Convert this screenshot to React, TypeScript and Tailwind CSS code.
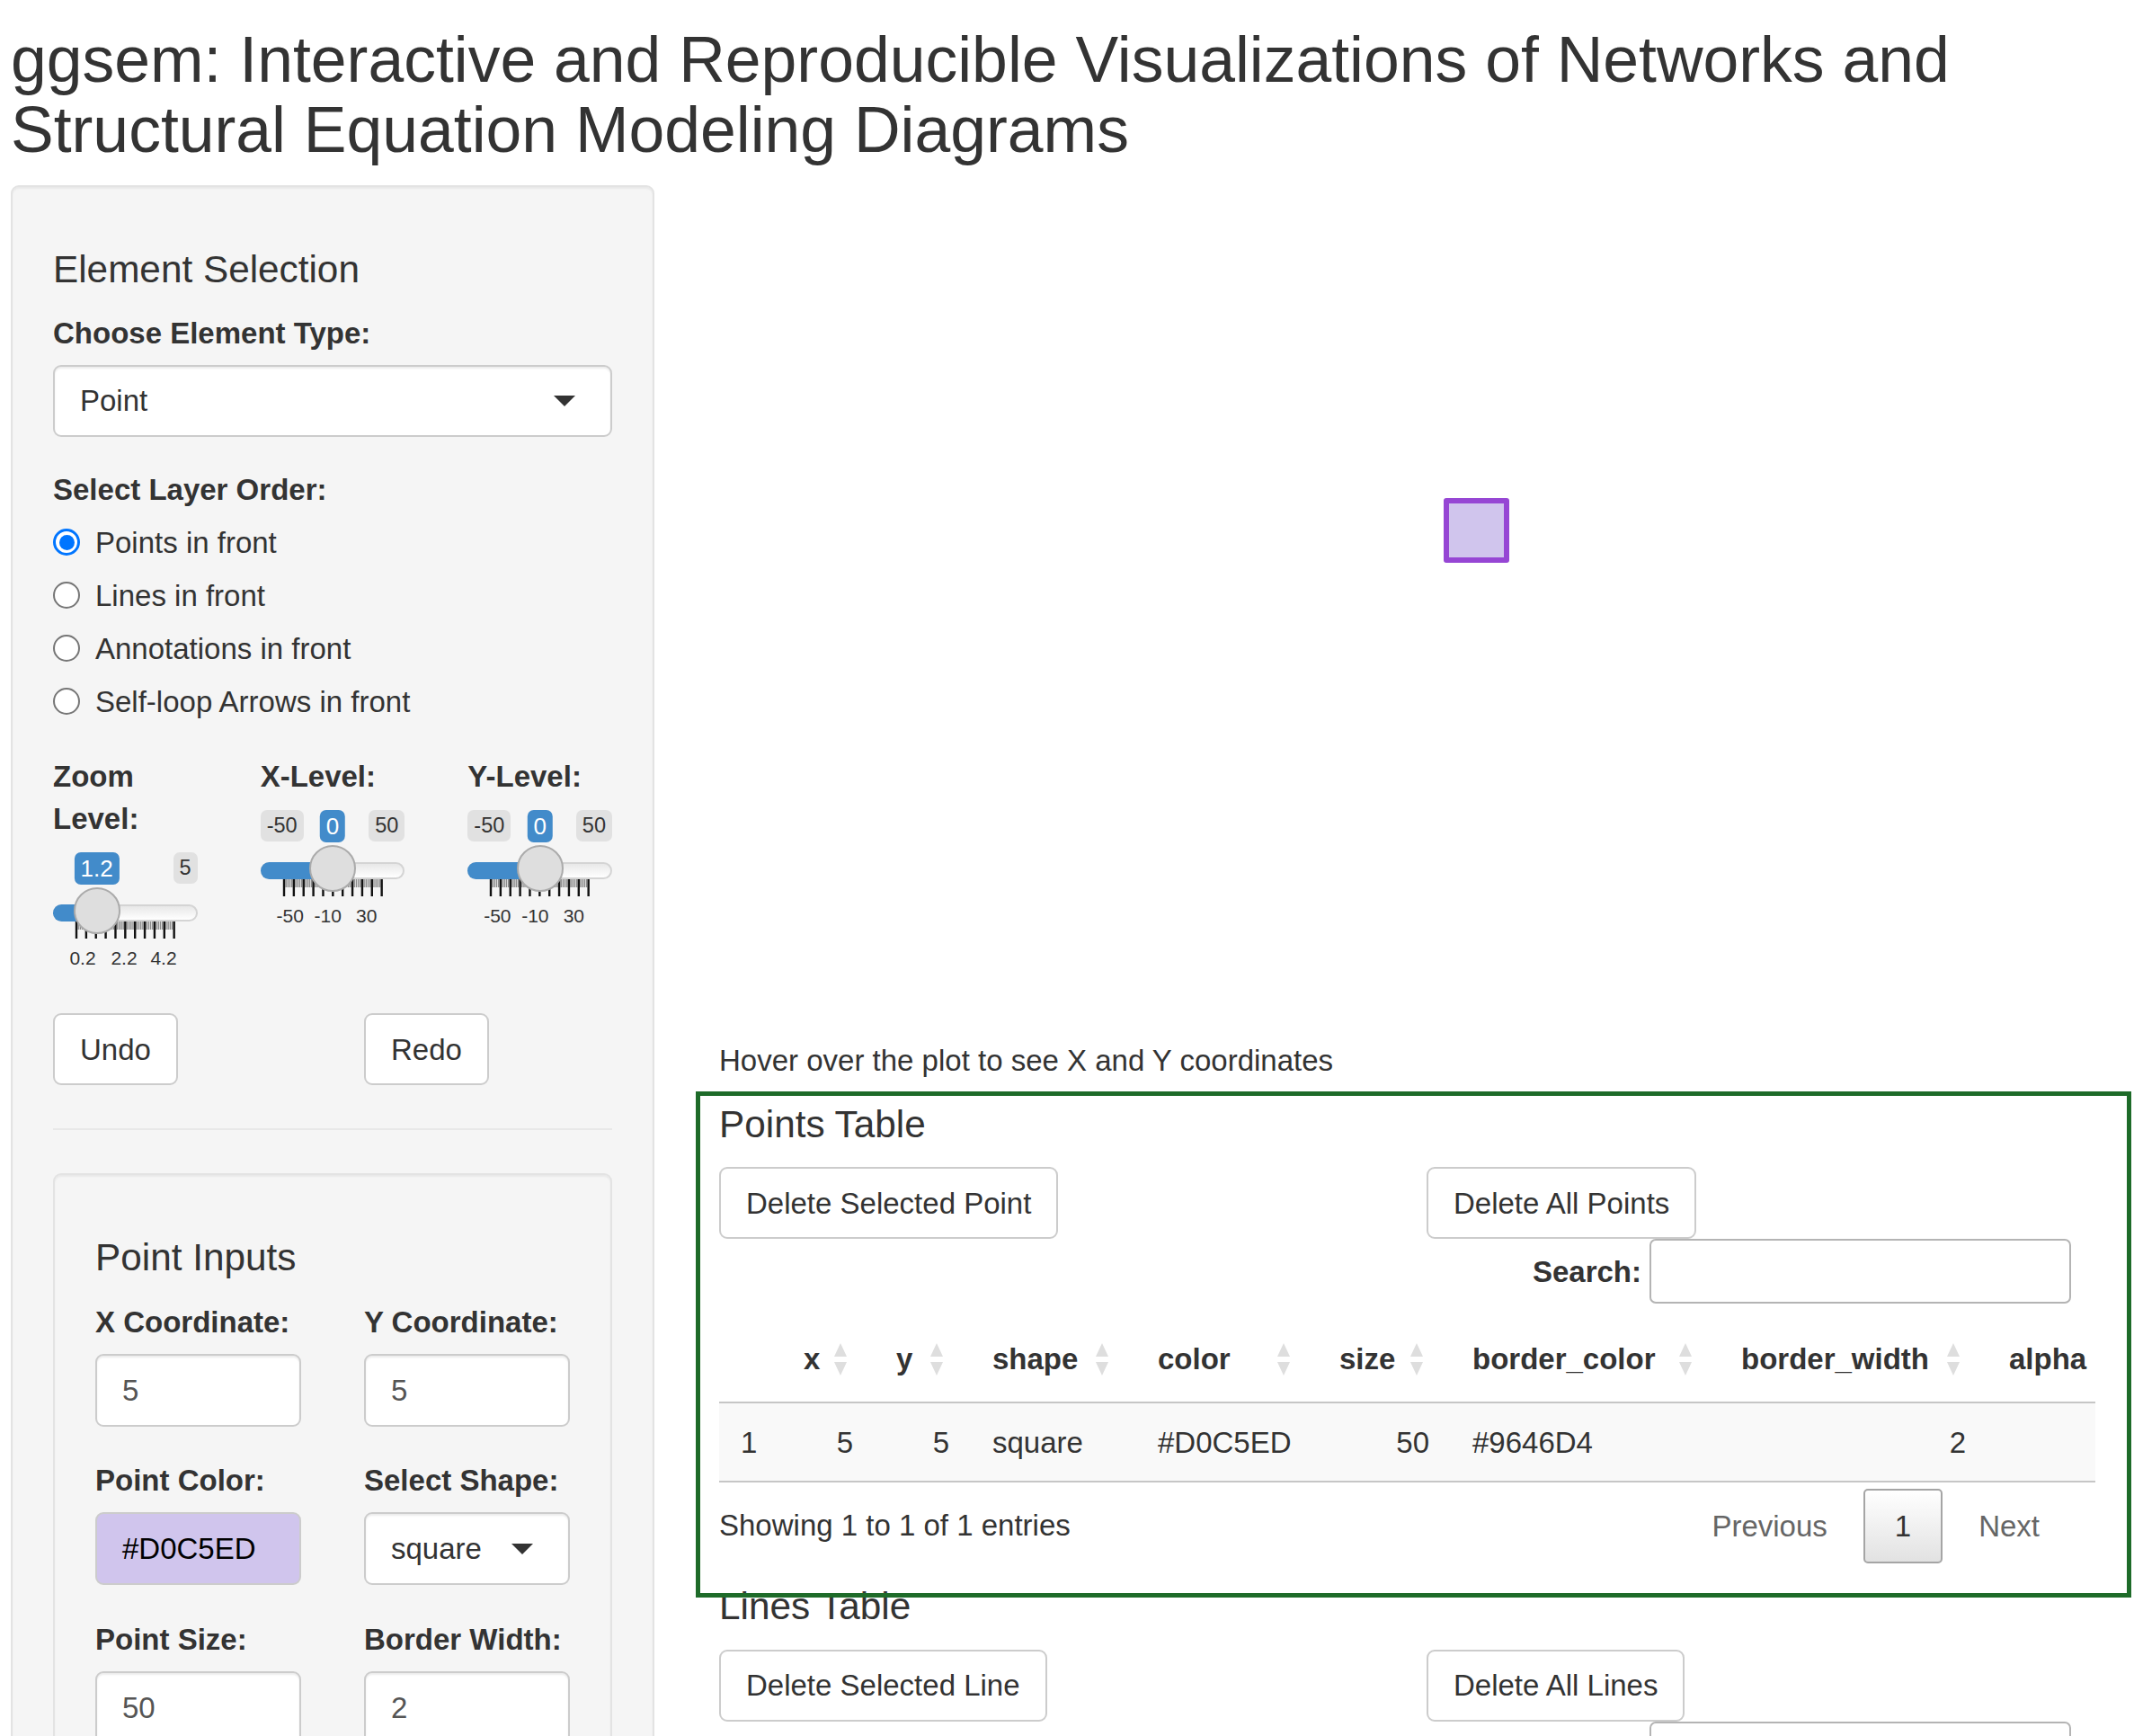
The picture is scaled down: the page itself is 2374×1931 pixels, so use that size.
import React from 'react';

const W = 160.67;
const HANDLE = 52;

type GridText = { t: string; x: number };

function Ticks() {
  const span = W - HANDLE;
  const big: number[] = [];
  const small: number[] = [];
  for (let i = 0; i <= 10; i++) {
    big.push(26 + (i * span) / 10);
    if (i < 10) {
      for (let j = 1; j < 5; j++) small.push(26 + ((i + j / 5) * span) / 10);
    }
  }
  return (
    <svg className="absolute left-0 top-[79px]" width={W} height={20} viewBox={`0 0 ${W} 20`}>
      {small.map((x, i) => (
        <rect key={`s${i}`} x={x - 0.7} y={0} width={1.4} height={9} fill="#8a8a8a" />
      ))}
      {big.map((x, i) => (
        <rect key={`b${i}`} x={x - 1.2} y={0} width={2.4} height={19} fill="#111" />
      ))}
    </svg>
  );
}

function Slider({ pct, value, min, max, grid }: { pct: number; value: string; min?: string; max: string; grid: GridText[] }) {
  const hx = HANDLE / 2 + pct * (W - HANDLE);
  return (
    <div className="relative h-[146px] w-full">
      {min && (
        <span className="absolute left-0 top-[2px] rounded-[7px] bg-[#e1e1e1] px-[7px] py-[2px] text-[23.5px] leading-[31px] text-[#333]">
          {min}
        </span>
      )}
      <span className="absolute right-0 top-[2px] rounded-[7px] bg-[#e1e1e1] px-[7px] py-[2px] text-[23.5px] leading-[31px] text-[#333]">
        {max}
      </span>
      <Ticks />
      {grid.map((g) => (
        <span
          key={g.t}
          className="absolute top-[108px] -translate-x-1/2 text-[21px] leading-[24px] text-[#333]"
          style={{ left: g.x }}
        >
          {g.t}
        </span>
      ))}
      <div className="absolute left-0 right-0 top-[60px] h-[19px] rounded-full border-2 border-[#d4d4d4] bg-gradient-to-b from-[#e8e8e8] to-white" />
      <div className="absolute left-0 top-[60px] h-[19px] rounded-l-full bg-[#428bca]" style={{ width: hx }} />
      <div
        className="absolute top-[41px] h-[52px] w-[52px] rounded-full border-2 border-[#ababab] bg-[#dedede]"
        style={{ left: hx - HANDLE / 2 }}
      />
      <span
        className="absolute top-[2px] -translate-x-1/2 rounded-[7px] bg-[#428bca] px-[7px] py-[1px] text-[26px] leading-[34px] text-white"
        style={{ left: hx }}
      >
        {value}
      </span>
    </div>
  );
}

function Caret() {
  return <span className="h-0 w-0 border-x-[12px] border-t-[12px] border-x-transparent border-t-[#333]" />;
}

function SelectBox({ value, tall }: { value: string; tall?: boolean }) {
  return (
    <div
      className={
        tall
          ? 'flex h-[81px] items-center justify-between rounded-[9px] border-2 border-[#ccc] bg-white pl-[28px] pr-[39px] text-[#333] shadow-[inset_0_2px_2px_rgba(0,0,0,0.075)]'
          : 'flex h-[80px] items-center justify-between rounded-[9px] border-2 border-[#ccc] bg-white pl-[28px] pr-[39px] text-[#333] shadow-[inset_0_2px_2px_rgba(0,0,0,0.075)]'
      }
    >
      <span>{value}</span>
      <Caret />
    </div>
  );
}

function TextBox({ value, color }: { value: string; color?: boolean }) {
  return (
    <div
      className={
        color
          ? 'flex h-[81px] items-center rounded-[9px] border-2 border-[#ccc] bg-[#D0C5ED] px-[28px] text-black'
          : 'flex h-[81px] items-center rounded-[9px] border-2 border-[#ccc] bg-white px-[28px] text-[#555] shadow-[inset_0_2px_2px_rgba(0,0,0,0.075)]'
      }
    >
      {value}
    </div>
  );
}

function Label({ children }: { children: React.ReactNode }) {
  return <label className="mb-[12px] block font-bold">{children}</label>;
}

function Radio({ label, checked }: { label: string; checked?: boolean }) {
  return (
    <div className="flex h-[47px] items-center">
      {checked ? (
        <span className="flex h-[30px] w-[30px] items-center justify-center rounded-full border-[3px] border-[#0075ff] bg-white">
          <span className="h-[17px] w-[17px] rounded-full bg-[#0075ff]" />
        </span>
      ) : (
        <span className="h-[30px] w-[30px] rounded-full border-2 border-[#767676] bg-white" />
      )}
      <span className="ml-[17px]">{label}</span>
    </div>
  );
}

function Btn({ children }: { children: React.ReactNode }) {
  return (
    <button className="rounded-[9px] border-2 border-[#ccc] bg-white px-[28px] py-[14.5px] leading-[47px] text-[#333]">
      {children}
    </button>
  );
}

function Sidebar() {
  return (
    <aside className="w-[716px] shrink-0 rounded-[9px] border-2 border-[#e3e3e3] bg-[#f5f5f5] p-[45px] shadow-[inset_0_2px_2px_rgba(0,0,0,0.05)]">
      <h4 className="mb-[23.5px] mt-[23.5px] text-[42.3px] leading-[46.5px]">Element Selection</h4>
      <div className="mb-[35px]">
        <Label>Choose Element Type:</Label>
        <SelectBox value="Point" />
      </div>
      <div className="mb-[36.5px]">
        <Label>Select Layer Order:</Label>
        <div className="mt-[5px] flex flex-col gap-[12px]">
          <Radio label="Points in front" checked />
          <Radio label="Lines in front" />
          <Radio label="Annotations in front" />
          <Radio label="Self-loop Arrows in front" />
        </div>
      </div>

      <div className="mb-[35px] grid grid-cols-3 gap-x-[70px]">
        <div>
          <Label>Zoom Level:</Label>
          <Slider
            pct={(1.2 - 0.2) / 4.8}
            value="1.2"
            max="5"
            grid={[
              { t: '0.2', x: 33 },
              { t: '2.2', x: 79 },
              { t: '4.2', x: 123 },
            ]}
          />
        </div>
        <div>
          <Label>X-Level:</Label>
          <Slider
            pct={0.5}
            value="0"
            min="-50"
            max="50"
            grid={[
              { t: '-50', x: 33 },
              { t: '-10', x: 75 },
              { t: '30', x: 118 },
            ]}
          />
        </div>
        <div>
          <Label>Y-Level:</Label>
          <Slider
            pct={0.5}
            value="0"
            min="-50"
            max="50"
            grid={[
              { t: '-50', x: 33 },
              { t: '-10', x: 75 },
              { t: '30', x: 118 },
            ]}
          />
        </div>
      </div>

      <div className="grid grid-cols-2 gap-x-[70px]">
        <div>
          <Btn>Undo</Btn>
        </div>
        <div>
          <Btn>Redo</Btn>
        </div>
      </div>

      <hr className="my-[48px] border-0 border-t-2 border-[#e8e8e8]" />

      <div className="rounded-[9px] border-2 border-[#e3e3e3] bg-[#f5f5f5] p-[45px] shadow-[inset_0_2px_2px_rgba(0,0,0,0.05)]">
        <h4 className="mb-[24px] mt-[24px] text-[42.3px] leading-[46.5px]">Point Inputs</h4>
        <div className="grid grid-cols-2 gap-x-[70px]">
          <div className="mb-[36.5px]">
            <Label>X Coordinate:</Label>
            <TextBox value="5" />
          </div>
          <div className="mb-[36.5px]">
            <Label>Y Coordinate:</Label>
            <TextBox value="5" />
          </div>
          <div className="mb-[36.5px]">
            <Label>Point Color:</Label>
            <TextBox value="#D0C5ED" color />
          </div>
          <div className="mb-[36.5px]">
            <Label>Select Shape:</Label>
            <SelectBox value="square" tall />
          </div>
          <div className="mb-[36.5px]">
            <Label>Point Size:</Label>
            <TextBox value="50" />
          </div>
          <div className="mb-[36.5px]">
            <Label>Border Width:</Label>
            <TextBox value="2" />
          </div>
        </div>
      </div>
    </aside>
  );
}

const columns = [
  { label: '', col: 'w-[70px]', sort: false, right: false },
  { label: 'x', col: 'w-[103px]', sort: true, right: true },
  { label: 'y', col: 'w-[107px]', sort: true, right: true },
  { label: 'shape', col: 'w-[184px]', sort: true, right: false },
  { label: 'color', col: 'w-[202px]', sort: true, right: false },
  { label: 'size', col: 'w-[148px]', sort: true, right: true },
  { label: 'border_color', col: 'w-[299px]', sort: true, right: false },
  { label: 'border_width', col: 'w-[298px]', sort: true, right: true },
  { label: 'alpha', col: 'w-[120px]', sort: false, right: true },
];

const pointRow = ['1', '5', '5', 'square', '#D0C5ED', '50', '#9646D4', '2', ''];

function SortIcon() {
  return (
    <svg className="absolute right-[30px] top-1/2 -translate-y-1/2" width="16" height="38" viewBox="0 0 16 38">
      <path d="M8 1 L15 16 L1 16 Z" fill="#dedede" />
      <path d="M1 22 L15 22 L8 37 Z" fill="#dedede" />
    </svg>
  );
}

function Filter() {
  return (
    <div className="flex h-[72px] items-center justify-end">
      <span className="font-bold">Search:</span>
      <div className="ml-[9px] h-[72px] w-[469px] rounded-[7px] border-2 border-[#b4b4b4] bg-white" />
    </div>
  );
}

function PointsTable() {
  return (
    <div>
      <Filter />
      <table className="mt-[14px] w-[1531px] table-fixed border-collapse">
        <colgroup>
          {columns.map((c, i) => (
            <col key={i} className={c.col} />
          ))}
        </colgroup>
        <thead>
          <tr>
            {columns.map((c, i) => (
              <th
                key={i}
                className="relative border-b-2 border-[#c6c6c6] py-[24px] pl-[24px] text-left font-bold leading-[47px]"
              >
                {c.label}
                {c.sort && <SortIcon />}
              </th>
            ))}
          </tr>
        </thead>
        <tbody>
          <tr className="bg-[#f9f9f9]">
            {pointRow.map((v, i) => (
              <td
                key={i}
                className={
                  columns[i].right
                    ? 'border-b-2 border-[#c6c6c6] py-[19.5px] pr-[24px] text-right leading-[47px]'
                    : 'border-b-2 border-[#c6c6c6] py-[19.5px] pl-[24px] text-left leading-[47px]'
                }
              >
                {v}
              </td>
            ))}
          </tr>
        </tbody>
      </table>
      <div className="flex items-start justify-between">
        <div className="pt-[24px] leading-[47px]">Showing 1 to 1 of 1 entries</div>
        <div className="flex items-center pt-[7px]">
          <span className="border-2 border-transparent px-[33px] py-[16px] leading-[47px] text-[#666]">Previous</span>
          <span className="ml-[5px] rounded-[5px] border-2 border-[#a5a5a5] bg-gradient-to-b from-white to-[#e2e2e2] px-[33px] py-[16px] leading-[47px] text-[#333]">
            1
          </span>
          <span className="ml-[5px] border-2 border-transparent px-[33px] py-[16px] leading-[47px] text-[#666]">Next</span>
        </div>
      </div>
    </div>
  );
}

function MainPanel() {
  return (
    <main className="relative w-[1504px] shrink-0">
      <div className="relative h-[950px]">
        <div className="absolute left-[806px] top-[348px] h-[72px] w-[73px] rounded-[3px] border-[6px] border-[#9646D4] bg-[#D0C5ED]" />
      </div>
      <div>Hover over the plot to see X and Y coordinates</div>

      <h4 className="mb-[24px] mt-[24.5px] text-[42.3px] leading-[46.5px]">Points Table</h4>
      <div className="mt-[3px] grid grid-cols-2 gap-x-[70px]">
        <div>
          <Btn>Delete Selected Point</Btn>
        </div>
        <div>
          <Btn>Delete All Points</Btn>
        </div>
      </div>
      <PointsTable />

      <h4 className="mb-[24px] mt-[25px] text-[42.3px] leading-[46.5px]">Lines Table</h4>
      <div className="grid grid-cols-2 gap-x-[70px]">
        <div>
          <Btn>Delete Selected Line</Btn>
        </div>
        <div>
          <Btn>Delete All Lines</Btn>
        </div>
      </div>
      <Filter />

      {/* highlight frame around the points table */}
      <div className="pointer-events-none absolute left-[-26px] top-[1008px] h-[563px] w-[1597px] border-[5px] border-[#1e6b29]" />
    </main>
  );
}

export default function App() {
  return (
    <div className="h-[1931px] overflow-hidden bg-white pl-[12px] pr-[70px] pt-[28px] font-['Liberation_Sans',Arial,Helvetica,sans-serif] text-[33px] leading-[47px] text-[#333]">
      <h2 className="mb-[23px] text-[71.5px] font-normal leading-[77.5px]">
        ggsem: Interactive and Reproducible Visualizations of Networks and Structural Equation Modeling Diagrams
      </h2>
      <div className="flex items-start gap-[72px]">
        <Sidebar />
        <MainPanel />
      </div>
    </div>
  );
}
